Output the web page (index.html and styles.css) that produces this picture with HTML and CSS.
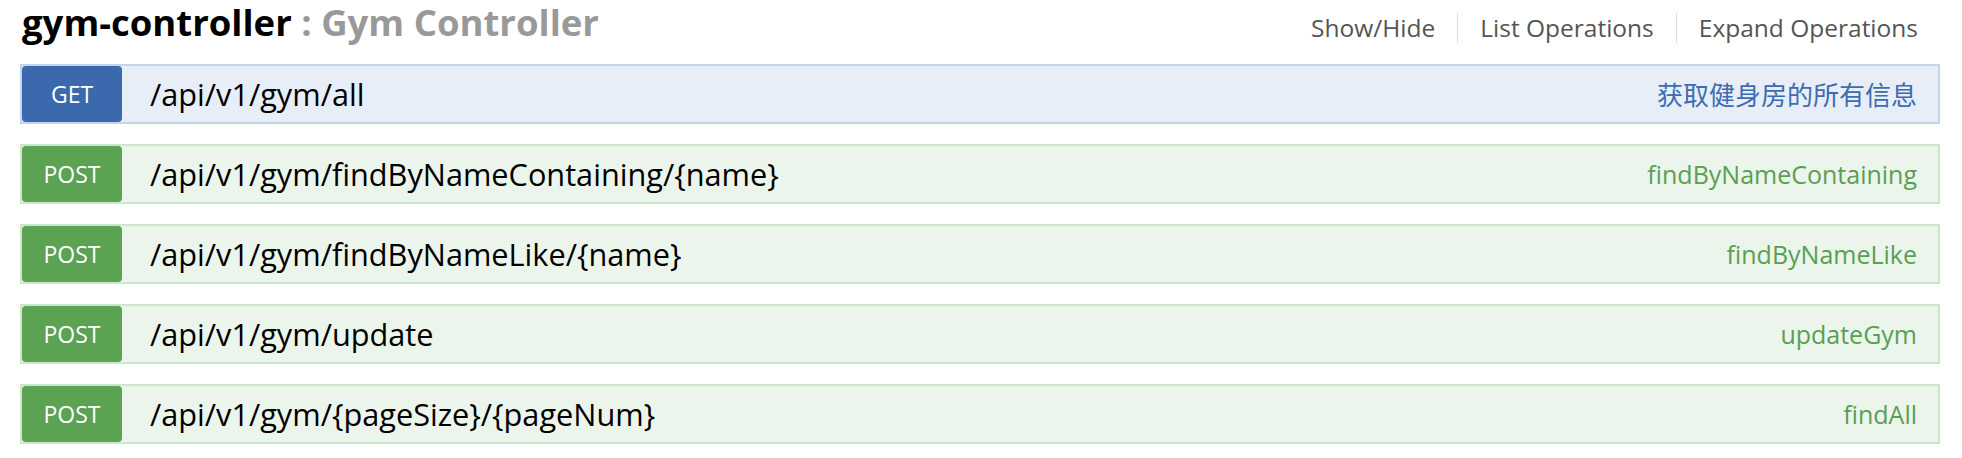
FILE: index.html
```html
<!DOCTYPE html>
<html lang="zh-CN">
<head>
<meta charset="utf-8">
<title>gym-controller</title>
<link rel="stylesheet" href="styles.css">
</head>
<body>
<div class="resource">
  <div class="heading">
    <h2 class="title"><span class="name">gym-controller</span><span class="desc"> : Gym Controller</span></h2>
    <ul class="options">
      <li>Show/Hide</li>
      <li>List Operations</li>
      <li>Expand Operations</li>
    </ul>
  </div>
  <ul class="endpoints">
    <li class="op get"><span class="method">GET</span><span class="path">/api/v1/gym/all</span><span class="summary cjk">获取健身房的所有信息</span></li>
    <li class="op post"><span class="method">POST</span><span class="path">/api/v1/gym/findByNameContaining/{name}</span><span class="summary">findByNameContaining</span></li>
    <li class="op post"><span class="method">POST</span><span class="path">/api/v1/gym/findByNameLike/{name}</span><span class="summary">findByNameLike</span></li>
    <li class="op post"><span class="method">POST</span><span class="path">/api/v1/gym/update</span><span class="summary">updateGym</span></li>
    <li class="op post"><span class="method">POST</span><span class="path">/api/v1/gym/{pageSize}/{pageNum}</span><span class="summary">findAll</span></li>
  </ul>
</div>
</body>
</html>
```

FILE: styles.css
```css
body {
  margin: 0;
  background: #fff;
  font-family: "Open Sans", "Noto Sans CJK SC", sans-serif;
}

.resource {
  padding: 0 22px 0 20px;
}

.heading {
  display: flex;
  justify-content: space-between;
  align-items: flex-start;
  height: 64px;
}

.title {
  margin: 0;
  font-size: 36.5px;
  font-weight: 700;
  line-height: 44px;
  padding-left: 2px;
}

.title .name {
  color: #000;
}

.title .desc {
  color: #999;
}

.options {
  display: flex;
  list-style: none;
  margin: 13px 0 0;
  padding: 0;
}

.options li {
  font-size: 24.5px;
  line-height: 30px;
  padding: 0 22px;
  color: #555;
  border-right: 1px solid #ddd;
}

.options li:last-child {
  border-right: none;
}

.endpoints {
  list-style: none;
  margin: 0;
  padding: 0;
}

.op {
  display: flex;
  align-items: center;
  height: 60px;
  box-sizing: border-box;
  border: 2px solid;
  margin-bottom: 20px;
}

.method {
  flex: none;
  width: 100px;
  height: 56px;
  border-radius: 4px;
  display: flex;
  align-items: center;
  justify-content: center;
  color: #fff;
  font-size: 23px;
}

.path {
  flex: 1;
  margin-left: 28px;
  font-size: 30.7px;
  color: #000;
}

.summary {
  padding-right: 21px;
  font-size: 25px;
}

.summary.cjk {
  font-size: 26px;
}

.get {
  background: #e7eef7;
  border-color: #c3d5ea;
}

.get .method {
  background: #3c69ae;
}

.get .summary {
  color: #3d6cb2;
}

.post {
  background: #ebf5ec;
  border-color: #cbe6cd;
}

.post .method {
  background: #5ba253;
}

.post .summary {
  color: #5a9f52;
}
```
